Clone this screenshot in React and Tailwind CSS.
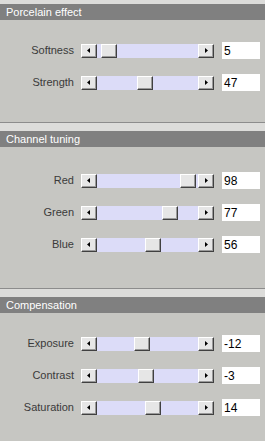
import React from 'react'

// Three grouped panels of labelled sliders with numeric readouts.
const sections = [
  {
    title: 'Porcelain effect',
    first: true,
    pad: 'pt-[22px] pb-[31px]',
    min: 0,
    max: 100,
    rows: [
      { label: 'Softness', value: 5 },
      { label: 'Strength', value: 47 },
    ],
  },
  {
    title: 'Channel tuning',
    pad: 'pt-[25px] pb-[35px]',
    min: 0,
    max: 100,
    rows: [
      { label: 'Red', value: 98 },
      { label: 'Green', value: 77 },
      { label: 'Blue', value: 56 },
    ],
  },
  {
    title: 'Compensation',
    pad: 'pt-[22px] pb-[26px]',
    min: -100,
    max: 100,
    rows: [
      { label: 'Exposure', value: -12 },
      { label: 'Contrast', value: -3 },
      { label: 'Saturation', value: 14 },
    ],
  },
]

const bevel =
  'border border-t-white border-l-white border-b-[#404040] border-r-[#404040] bg-[#e6e6e6] shadow-[inset_-1px_-1px_0_#9a9a9a]'

function Arrow({ dir }) {
  return (
    <svg width="4" height="5" viewBox="0 0 4 5">
      {dir === 'left' ? <path d="M3 0V5L0 2.5Z" fill="#000" /> : <path d="M1 0V5L4 2.5Z" fill="#000" />}
    </svg>
  )
}

function Slider({ value, min, max }) {
  const travel = 85
  const left = Math.round(((value - min) / (max - min)) * travel)
  return (
    <div className="flex h-[14px] w-[133px] items-stretch">
      <div className={`flex w-[16px] items-center justify-center ${bevel}`}>
        <Arrow dir="left" />
      </div>
      <div className="relative flex-1 bg-[#dcdcf8]">
        <div className={`absolute top-0 h-[14px] w-[16px] ${bevel}`} style={{ left }} />
      </div>
      <div className={`flex w-[16px] items-center justify-center ${bevel}`}>
        <Arrow dir="right" />
      </div>
    </div>
  )
}

export default function App() {
  return (
    <div className="h-[441px] w-[265px] overflow-hidden bg-[#c6c6c2] font-['Liberation_Sans',Arial,sans-serif] text-[11px]">
      {sections.map((s) => (
        <div key={s.title} className={s.first ? '' : 'border-t border-[#8c8c8c]'}>
          <div className={s.first ? 'h-[4px] bg-[#dcdcda]' : 'h-[8px] bg-[#dcdcda]'} />
          <div className="flex h-[16px] items-center bg-[#808080] pl-[6px] text-[11px] text-white">{s.title}</div>
          <div className={`flex flex-col gap-[15px] ${s.pad}`}>
            {s.rows.map((r) => (
              <div key={r.label} className="flex h-[17px] items-center">
                <div className="w-[75px] pr-[1px] text-right text-[#3a3a3a]">{r.label}</div>
                <div className="ml-[6px]">
                  <Slider value={r.value} min={s.min} max={s.max} />
                </div>
                <div className="ml-[8px] flex h-[17px] w-[38px] items-center bg-white pl-[2px] text-[12px] text-black">
                  {r.value}
                </div>
              </div>
            ))}
          </div>
        </div>
      ))}
    </div>
  )
}
